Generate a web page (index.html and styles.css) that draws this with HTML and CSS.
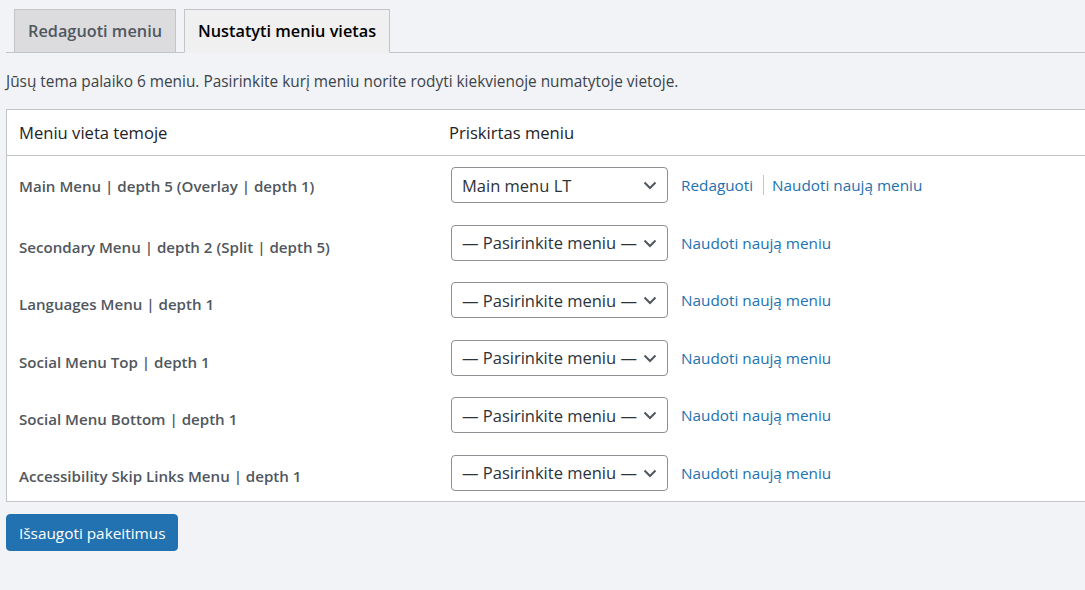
FILE: index.html
```html
<!DOCTYPE html>
<html lang="lt">
<head>
<meta charset="utf-8">
<title>Meniu vietos</title>
<link rel="stylesheet" href="styles.css">
</head>
<body>
<div class="wrap">
  <nav class="tabs">
    <a class="tab" href="#">Redaguoti meniu</a>
    <a class="tab tab-active" href="#">Nustatyti meniu vietas</a>
  </nav>
  <p class="desc">Jūsų tema palaiko 6 meniu. Pasirinkite kurį meniu norite rodyti kiekvienoje numatytoje vietoje.</p>
  <table class="locations">
    <thead>
      <tr><th class="col-loc">Meniu vieta temoje</th><th class="col-menu">Priskirtas meniu</th></tr>
    </thead>
    <tbody>
      <tr>
        <td class="loc loc-first">Main Menu | depth 5 (Overlay | depth 1)</td>
        <td class="menu">
          <div class="cell">
            <div class="select"><span>Main menu LT</span><svg class="chev" viewBox="0 0 16 16" width="16" height="16"><path d="M2.5 5.5 L8 11 L13.5 5.5" fill="none" stroke="#50575e" stroke-width="2"/></svg></div>
            <a class="link" href="#">Redaguoti</a><span class="sep"></span><a class="link" href="#">Naudoti naują meniu</a>
          </div>
        </td>
      </tr>
      <tr>
        <td class="loc">Secondary Menu | depth 2 (Split | depth 5)</td>
        <td class="menu">
          <div class="cell">
            <div class="select"><span>— Pasirinkite meniu —</span><svg class="chev" viewBox="0 0 16 16" width="16" height="16"><path d="M2.5 5.5 L8 11 L13.5 5.5" fill="none" stroke="#50575e" stroke-width="2"/></svg></div>
            <a class="link" href="#">Naudoti naują meniu</a>
          </div>
        </td>
      </tr>
      <tr>
        <td class="loc">Languages Menu | depth 1</td>
        <td class="menu">
          <div class="cell">
            <div class="select"><span>— Pasirinkite meniu —</span><svg class="chev" viewBox="0 0 16 16" width="16" height="16"><path d="M2.5 5.5 L8 11 L13.5 5.5" fill="none" stroke="#50575e" stroke-width="2"/></svg></div>
            <a class="link" href="#">Naudoti naują meniu</a>
          </div>
        </td>
      </tr>
      <tr>
        <td class="loc">Social Menu Top | depth 1</td>
        <td class="menu">
          <div class="cell">
            <div class="select"><span>— Pasirinkite meniu —</span><svg class="chev" viewBox="0 0 16 16" width="16" height="16"><path d="M2.5 5.5 L8 11 L13.5 5.5" fill="none" stroke="#50575e" stroke-width="2"/></svg></div>
            <a class="link" href="#">Naudoti naują meniu</a>
          </div>
        </td>
      </tr>
      <tr>
        <td class="loc">Social Menu Bottom | depth 1</td>
        <td class="menu">
          <div class="cell">
            <div class="select"><span>— Pasirinkite meniu —</span><svg class="chev" viewBox="0 0 16 16" width="16" height="16"><path d="M2.5 5.5 L8 11 L13.5 5.5" fill="none" stroke="#50575e" stroke-width="2"/></svg></div>
            <a class="link" href="#">Naudoti naują meniu</a>
          </div>
        </td>
      </tr>
      <tr>
        <td class="loc">Accessibility Skip Links Menu | depth 1</td>
        <td class="menu">
          <div class="cell">
            <div class="select"><span>— Pasirinkite meniu —</span><svg class="chev" viewBox="0 0 16 16" width="16" height="16"><path d="M2.5 5.5 L8 11 L13.5 5.5" fill="none" stroke="#50575e" stroke-width="2"/></svg></div>
            <a class="link" href="#">Naudoti naują meniu</a>
          </div>
        </td>
      </tr>
    </tbody>
  </table>
  <button class="save" type="button">Išsaugoti pakeitimus</button>
</div>
</body>
</html>
```

FILE: styles.css
```css
html, body {
  margin: 0;
  padding: 0;
  background: #f1f3f6;
  overflow: hidden;
}
body {
  font-family: "Open Sans", "Noto Sans", sans-serif;
  color: #3c434a;
  font-size: 15.4px;
}
.wrap {
  padding-left: 6px;
  padding-top: 8px;
}
.tabs {
  display: flex;
  border-bottom: 1px solid #c3c4c7;
  height: 44px;
  align-items: flex-end;
}
.tab {
  display: block;
  margin-left: 8px;
  margin-bottom: -1px;
  padding: 7px 13px 7px 13px;
  line-height: 28px;
  font-size: 16.3px;
  font-weight: 600;
  color: #50575e;
  text-decoration: none;
  background: #dcdcde;
  border: 1px solid #c3c4c7;
}
.tab-active {
  background: #f0f0f1;
  color: #000;
  border-bottom-color: #f0f0f1;
}
.desc {
  margin: 18px 0 0 0;
  line-height: 21px;
  font-size: 15.4px;
  color: #3c434a;
}
.locations {
  margin-top: 17px;
  width: 1100px;
  border-collapse: collapse;
  table-layout: fixed;
  background: #fff;
  border: 1px solid #c3c4c7;
}
.col-loc {
  width: 406px;
}
.locations th {
  text-align: left;
  font-weight: 400;
  font-size: 16.6px;
  color: #1d2327;
  padding: 11px 12px 11px 12px;
  line-height: 23px;
  border-bottom: 1px solid #c3c4c7;
}
.loc {
  font-weight: 600;
  font-size: 15.1px;
  color: #50575e;
  padding: 14px 12px 6px 12px;
  vertical-align: middle;
}
.loc-first {
  padding-top: 11px;
  padding-bottom: 9px;
}
.menu {
  padding: 10.75px 12px 10.75px 14px;
  vertical-align: middle;
}
tbody tr:first-child .menu {
  padding-top: 11px;
}
tbody tr:last-child .menu {
  padding-bottom: 10.5px;
}
.cell {
  display: flex;
  align-items: center;
}
.select {
  box-sizing: border-box;
  width: 217px;
  height: 36px;
  border: 1px solid #8c8f94;
  border-radius: 4px;
  background: #fff;
  display: flex;
  align-items: center;
  justify-content: space-between;
  padding: 0 9px 0 10px;
  font-size: 16.5px;
  color: #2c3338;
  white-space: nowrap;
}
.chev {
  flex: none;
}
.link {
  color: #2271b1;
  text-decoration: none;
  font-size: 15.3px;
  margin-left: 13px;
}
.sep {
  display: inline-block;
  width: 1px;
  height: 20px;
  background: #c3c4c7;
  margin-left: 10px;
  margin-right: -5px;
}
.save {
  margin-top: 12px;
  background: #2271b1;
  color: #fff;
  border: 1px solid #2271b1;
  border-radius: 4px;
  font-family: "Open Sans", "Noto Sans", sans-serif;
  font-size: 15.35px;
  height: 37px;
  padding: 0 12px;
  cursor: pointer;
}
```
